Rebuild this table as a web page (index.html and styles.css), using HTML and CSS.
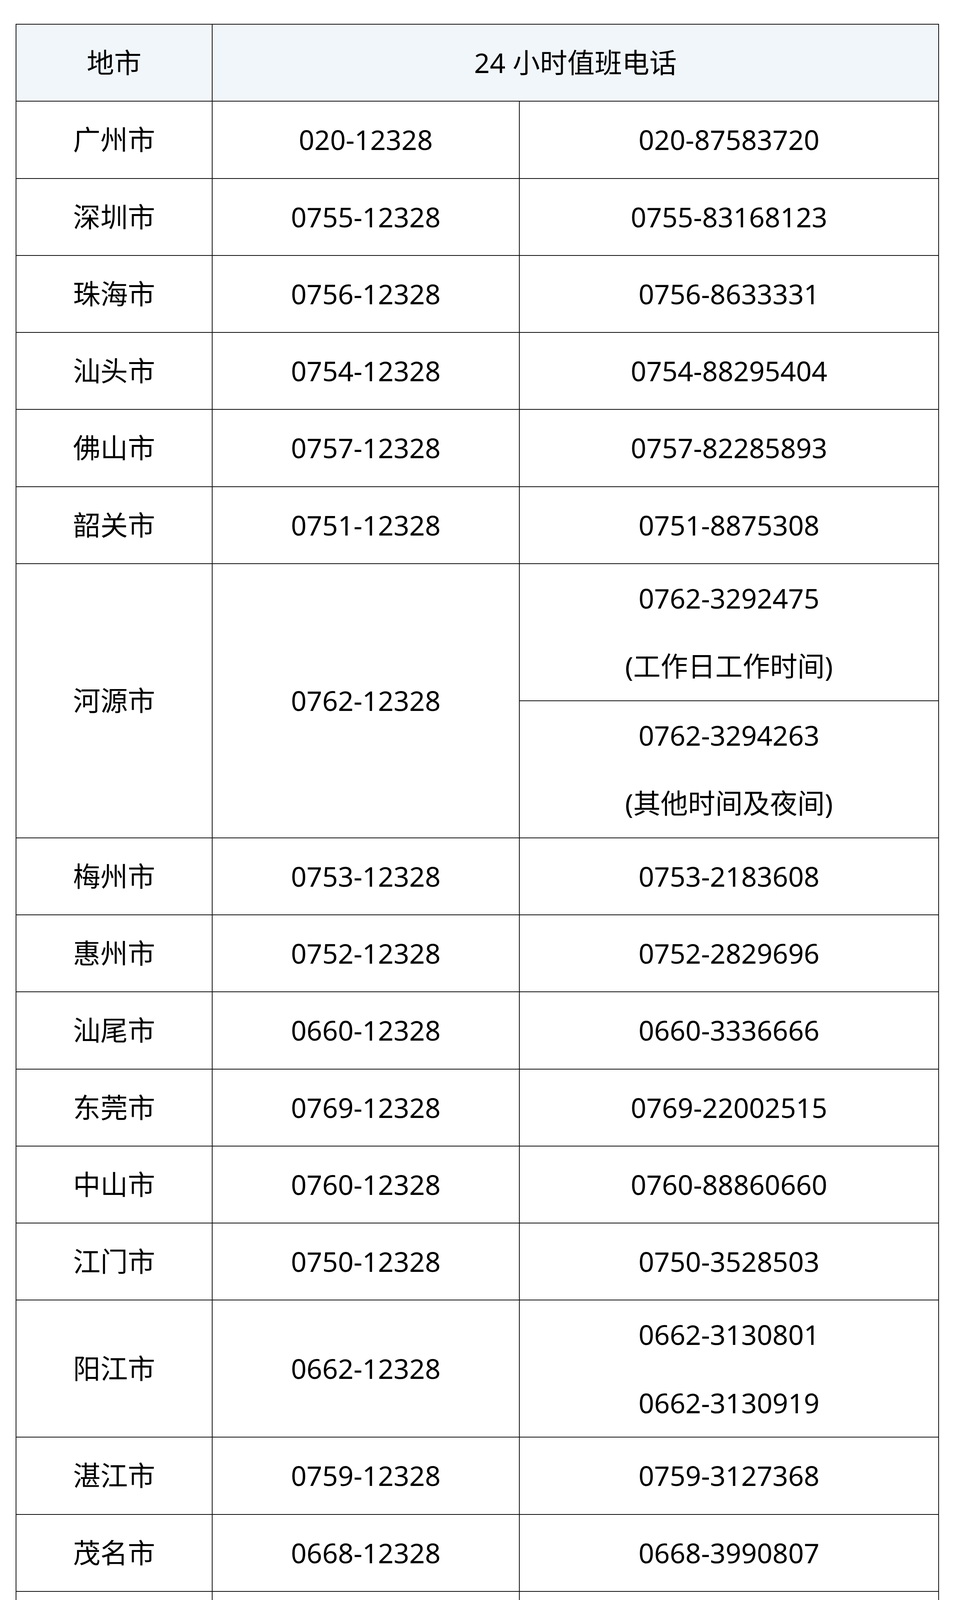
FILE: index.html
```html
<!DOCTYPE html>
<html lang="zh-CN">
<head>
<meta charset="utf-8">
<title>24小时值班电话</title>
<link rel="stylesheet" href="styles.css">
</head>
<body>
<div class="page">
<table class="duty">
  <colgroup>
    <col class="c-city">
    <col class="c-short">
    <col class="c-long">
  </colgroup>
  <thead>
    <tr><th>地市</th><th colspan="2">24 小时值班电话</th></tr>
  </thead>
  <tbody>
    <tr><td>广州市</td><td>020-12328</td><td>020-87583720</td></tr>
    <tr><td>深圳市</td><td>0755-12328</td><td>0755-83168123</td></tr>
    <tr><td>珠海市</td><td>0756-12328</td><td>0756-8633331</td></tr>
    <tr><td>汕头市</td><td>0754-12328</td><td>0754-88295404</td></tr>
    <tr><td>佛山市</td><td>0757-12328</td><td>0757-82285893</td></tr>
    <tr><td>韶关市</td><td>0751-12328</td><td>0751-8875308</td></tr>
    <tr><td rowspan="2">河源市</td><td rowspan="2">0762-12328</td><td class="multi"><div class="ln">0762-3292475</div><div class="ln">(工作日工作时间)</div></td></tr>
    <tr><td class="multi"><div class="ln">0762-3294263</div><div class="ln">(其他时间及夜间)</div></td></tr>
    <tr><td>梅州市</td><td>0753-12328</td><td>0753-2183608</td></tr>
    <tr><td>惠州市</td><td>0752-12328</td><td>0752-2829696</td></tr>
    <tr><td>汕尾市</td><td>0660-12328</td><td>0660-3336666</td></tr>
    <tr><td>东莞市</td><td>0769-12328</td><td>0769-22002515</td></tr>
    <tr><td>中山市</td><td>0760-12328</td><td>0760-88860660</td></tr>
    <tr><td>江门市</td><td>0750-12328</td><td>0750-3528503</td></tr>
    <tr><td>阳江市</td><td>0662-12328</td><td class="multi"><div class="ln">0662-3130801</div><div class="ln">0662-3130919</div></td></tr>
    <tr><td>湛江市</td><td>0759-12328</td><td>0759-3127368</td></tr>
    <tr><td>茂名市</td><td>0668-12328</td><td>0668-3990807</td></tr>
    <tr><td>肇庆市</td><td>0758-12328</td><td>0758-2727227</td></tr>
    <tr><td>清远市</td><td>0763-12328</td><td>0763-3366776</td></tr>
    <tr><td>潮州市</td><td>0768-12328</td><td>0768-2295060</td></tr>
    <tr><td>揭阳市</td><td>0663-12328</td><td>0663-8236601</td></tr>
    <tr><td>云浮市</td><td>0766-12328</td><td>0766-8926018</td></tr>
  </tbody>
</table>
</div>
</body>
</html>
```

FILE: styles.css
```css
html, body {
  margin: 0;
  padding: 0;
  background: #ffffff;
}

.page {
  padding: 61px 0 0 40px;
}

.duty {
  border-collapse: collapse;
  table-layout: fixed;
  width: 2361px;
  font-family: "Noto Sans", "Noto Sans CJK SC", sans-serif;
  font-size: 70px;
  color: #000000;
}

.c-city { width: 502px; }
.c-short { width: 786px; }
.c-long { width: 1073px; }

.duty th,
.duty td {
  border: 2px solid #0d0d0d;
  padding: 0;
  text-align: center;
  vertical-align: middle;
  font-weight: normal;
  line-height: 195.25px;
}

.duty th {
  background: #f1f6fa;
}

.duty td.multi {
  line-height: 174.5px;
}

.ln {
  display: block;
}
```
